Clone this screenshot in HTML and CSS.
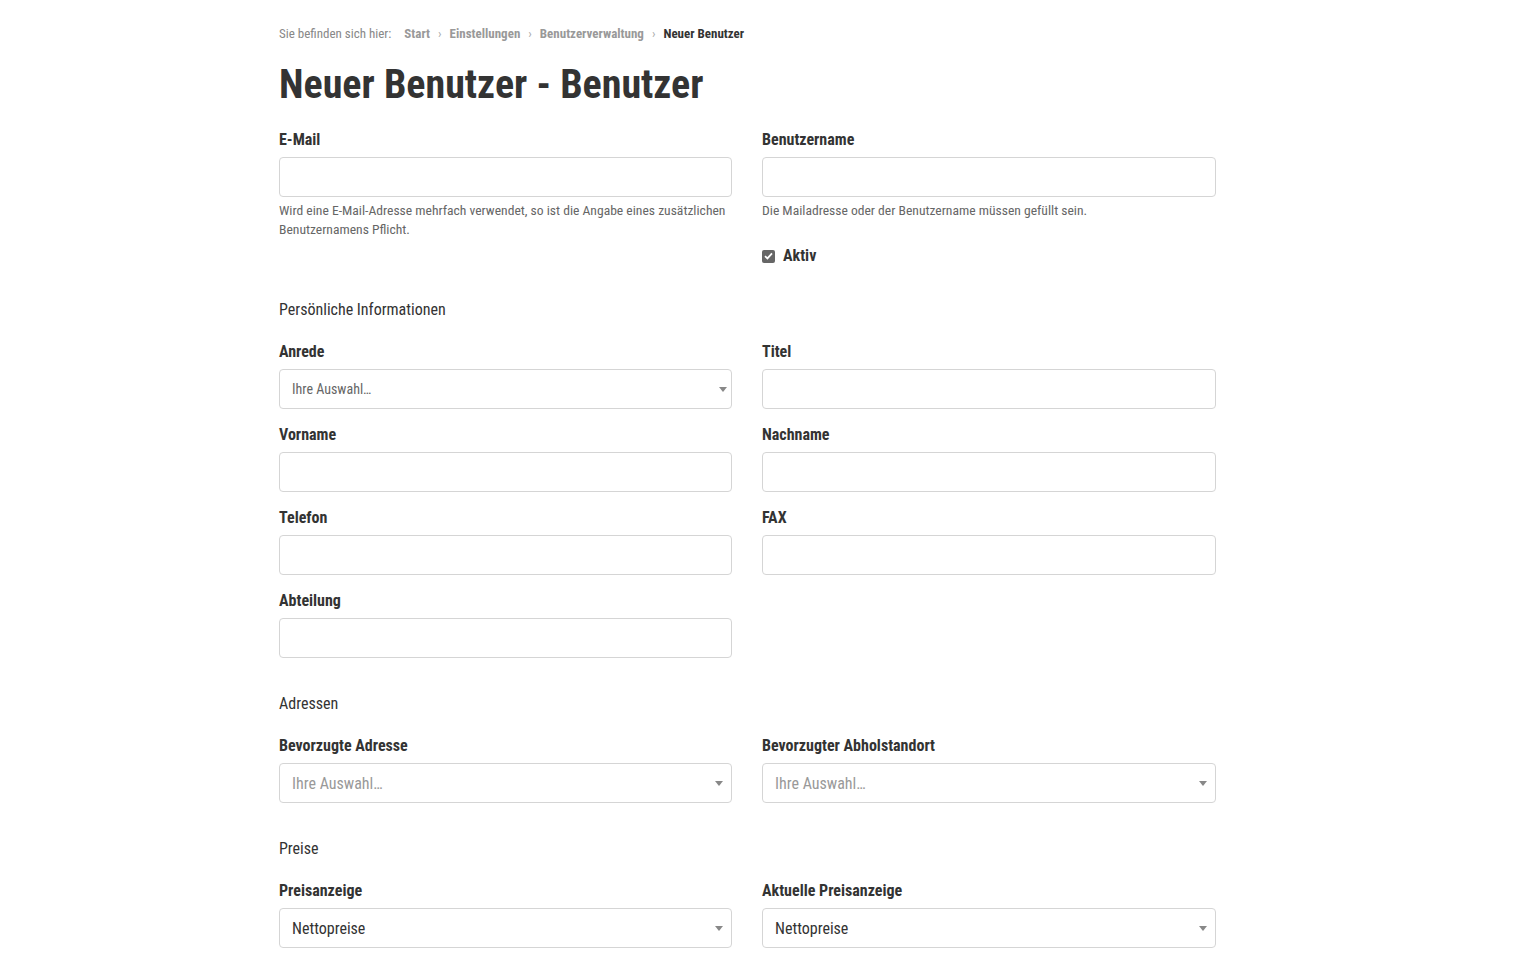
FILE: index.html
```html
<!DOCTYPE html>
<html lang="de">
    <head>
        <title>Neuer Benutzer - Benutzer</title>
        <link rel="stylesheet" href="styles.css">
    </head>

    <body>
        <main class="page">
            <nav class="crumbs">
                <span class="crumbsLead">Sie befinden sich hier:</span>
                <a href="#">Start</a>
                <span class="sep">›</span>
                <a href="#">Einstellungen</a>
                <span class="sep">›</span>
                <a href="#">Benutzerverwaltung</a>
                <span class="sep">›</span>
                <span class="current">Neuer Benutzer</span>
            </nav>

            <h1 class="title">Neuer Benutzer - Benutzer</h1>

            <form class="userForm">
                <div class="row">
                    <div class="field">
                        <label for="email">E-Mail</label>
                        <input type="text" id="email" name="email">
                        <p class="help">Wird eine E-Mail-Adresse mehrfach verwendet, so ist die Angabe eines zusätzlichen Benutzernamens Pflicht.</p>
                    </div>
                    <div class="field">
                        <label for="username">Benutzername</label>
                        <input type="text" id="username" name="username">
                        <p class="help">Die Mailadresse oder der Benutzername müssen gefüllt sein.</p>
                        <div class="check">
                            <span class="box">
                                <svg width="9" height="8" viewBox="0 0 9 8"><path d="M1 4.2 L3.4 6.4 L8 1.4" fill="none" stroke="#fff" stroke-width="1.8"/></svg>
                            </span>
                            <span class="checkLabel">Aktiv</span>
                        </div>
                    </div>
                </div>

                <h2 class="section first">Persönliche Informationen</h2>
                <div class="row">
                    <div class="field">
                        <label>Anrede</label>
                        <div class="select small"><span>Ihre Auswahl…</span><i class="arrow"></i></div>
                    </div>
                    <div class="field">
                        <label for="titel">Titel</label>
                        <input type="text" id="titel" name="titel">
                    </div>
                    <div class="field">
                        <label for="vorname">Vorname</label>
                        <input type="text" id="vorname" name="vorname">
                    </div>
                    <div class="field">
                        <label for="nachname">Nachname</label>
                        <input type="text" id="nachname" name="nachname">
                    </div>
                    <div class="field">
                        <label for="telefon">Telefon</label>
                        <input type="text" id="telefon" name="telefon">
                    </div>
                    <div class="field">
                        <label for="fax">FAX</label>
                        <input type="text" id="fax" name="fax">
                    </div>
                    <div class="field">
                        <label for="abteilung">Abteilung</label>
                        <input type="text" id="abteilung" name="abteilung">
                    </div>
                </div>

                <h2 class="section">Adressen</h2>
                <div class="row">
                    <div class="field">
                        <label>Bevorzugte Adresse</label>
                        <div class="select placeholder"><span>Ihre Auswahl…</span><i class="arrow"></i></div>
                    </div>
                    <div class="field">
                        <label>Bevorzugter Abholstandort</label>
                        <div class="select placeholder"><span>Ihre Auswahl…</span><i class="arrow"></i></div>
                    </div>
                </div>

                <h2 class="section">Preise</h2>
                <div class="row">
                    <div class="field">
                        <label>Preisanzeige</label>
                        <div class="select"><span>Nettopreise</span><i class="arrow"></i></div>
                    </div>
                    <div class="field">
                        <label>Aktuelle Preisanzeige</label>
                        <div class="select"><span>Nettopreise</span><i class="arrow"></i></div>
                    </div>
                </div>
            </form>
        </main>
    </body>
</html>
```

FILE: styles.css
```css
body {
    margin: 0;
    background: #fff;
    color: #333;
    font-family: "Roboto Condensed", Roboto, sans-serif;
    font-stretch: condensed;
}
.page {
    width: 937px;
    margin-left: 279px;
    padding-top: 26px;
}
.crumbs {
    font-size: 13px;
    line-height: 16px;
    color: #888;
    display: flex;
    align-items: center;
}
.crumbs a {
    color: #999;
    font-weight: bold;
    text-decoration: none;
}
.crumbsLead {
    margin-right: 13px;
}
.sep {
    margin: 0 8px;
    color: #aaa;
}
.current {
    font-weight: bold;
    color: #333;
}
.title {
    font-size: 40px;
    line-height: 48px;
    font-weight: bold;
    margin: 19px 0 20px;
    color: #333;
}
.row {
    display: grid;
    grid-template-columns: 453px 454px;
    column-gap: 30px;
    row-gap: 15px;
}
.field label {
    display: block;
    font-size: 16px;
    line-height: 22px;
    font-weight: bold;
    margin-bottom: 6px;
}
.field input, .select {
    box-sizing: border-box;
    width: 100%;
    height: 40px;
    border: 1px solid #d5d5d5;
    border-radius: 4px;
    margin: 0;
    font-family: inherit;
}
.help {
    margin: 4px 0 0;
    font-size: 13.6px;
    line-height: 19px;
    color: #666;
}
.check {
    display: flex;
    align-items: center;
    margin-top: 25px;
}
.box {
    width: 13px;
    height: 13px;
    border-radius: 2px;
    background: #666;
    display: flex;
    align-items: center;
    justify-content: center;
    margin-right: 8px;
}
.checkLabel {
    font-size: 16px;
    line-height: 22px;
    font-weight: bold;
}
.section {
    font-size: 16px;
    line-height: 22px;
    font-weight: normal;
    margin: 35px 0 20px;
}
.section.first {
    margin-top: 32px;
}
.select {
    display: flex;
    align-items: center;
    justify-content: space-between;
    padding: 0 8px 0 12px;
    font-size: 16px;
    color: #333;
}
.select.small {
    font-size: 14px;
    color: #666;
    padding-right: 4px;
}
.select.placeholder {
    color: #999;
}
.arrow {
    width: 0;
    height: 0;
    border-left: 4px solid transparent;
    border-right: 4px solid transparent;
    border-top: 5px solid #888;
}
```
